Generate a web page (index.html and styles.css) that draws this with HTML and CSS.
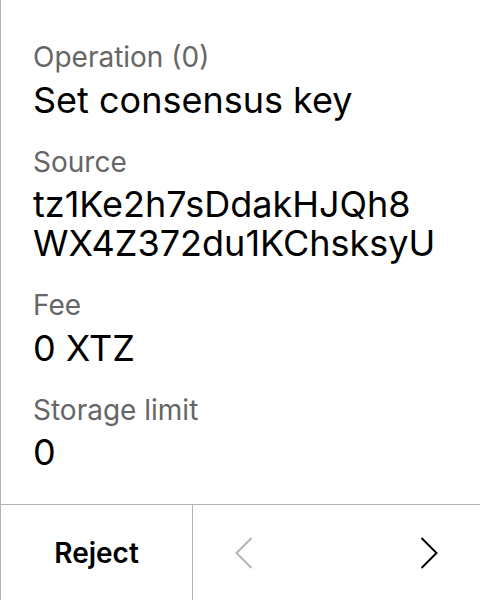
FILE: index.html
```html
<!DOCTYPE html>
<html>
<head>
<meta charset="utf-8">
<link rel="stylesheet" href="styles.css">
</head>
<body>
<div class="screen">
  <div class="content">
    <div class="field">
      <div class="label">Operation (0)</div>
      <div class="value">Set consensus key</div>
    </div>
    <div class="field">
      <div class="label">Source</div>
      <div class="value"><span class="line">tz1Ke2h7sDdakHJQh8</span><span class="line">WX4Z372du1KChsksyU</span></div>
    </div>
    <div class="field">
      <div class="label">Fee</div>
      <div class="value">0 XTZ</div>
    </div>
    <div class="field">
      <div class="label">Storage limit</div>
      <div class="value">0</div>
    </div>
  </div>
  <div class="footer">
    <div class="reject">Reject</div>
    <div class="nav">
      <svg class="chev prev" width="18" height="32" viewBox="0 0 18 32"><path d="M16.5 1 L1.5 16 L16.5 31" fill="none" stroke="currentColor" stroke-width="2"/></svg>
      <svg class="chev next" width="18" height="32" viewBox="0 0 18 32"><path d="M1.5 1 L16.5 16 L1.5 31" fill="none" stroke="currentColor" stroke-width="2"/></svg>
    </div>
  </div>
</div>
</body>
</html>
```
FILE: styles.css
```css
* { box-sizing: border-box; }
html, body { margin: 0; padding: 0; background: #fff; }
body { font-family: Inter, "Noto Sans", sans-serif; color: #000; }
.screen {
  width: 480px;
  height: 600px;
  border-left: 1px solid #b3b3b3;
  display: flex;
  flex-direction: column;
}
.content {
  flex: 1;
  padding: 40px 32px 0 32px;
  display: flex;
  flex-direction: column;
  gap: 25px;
}
.field {
  display: flex;
  flex-direction: column;
  gap: 6.5px;
}
.label {
  font-size: 28px;
  line-height: 34px;
  color: #666;
}
.value {
  font-size: 36px;
  line-height: 39px;
  color: #000;
}
.line { display: block; }
.footer {
  height: 96px;
  border-top: 1px solid #b3b3b3;
  display: flex;
}
.reject {
  width: 192px;
  border-right: 1px solid #b3b3b3;
  display: flex;
  align-items: center;
  justify-content: center;
  font-weight: 600;
  font-size: 28px;
}
.nav {
  flex: 1;
  display: flex;
  align-items: center;
  justify-content: space-between;
  padding: 0 42px;
}
.chev.prev { color: #b3b3b3; }
.chev.next { color: #000; }
```
